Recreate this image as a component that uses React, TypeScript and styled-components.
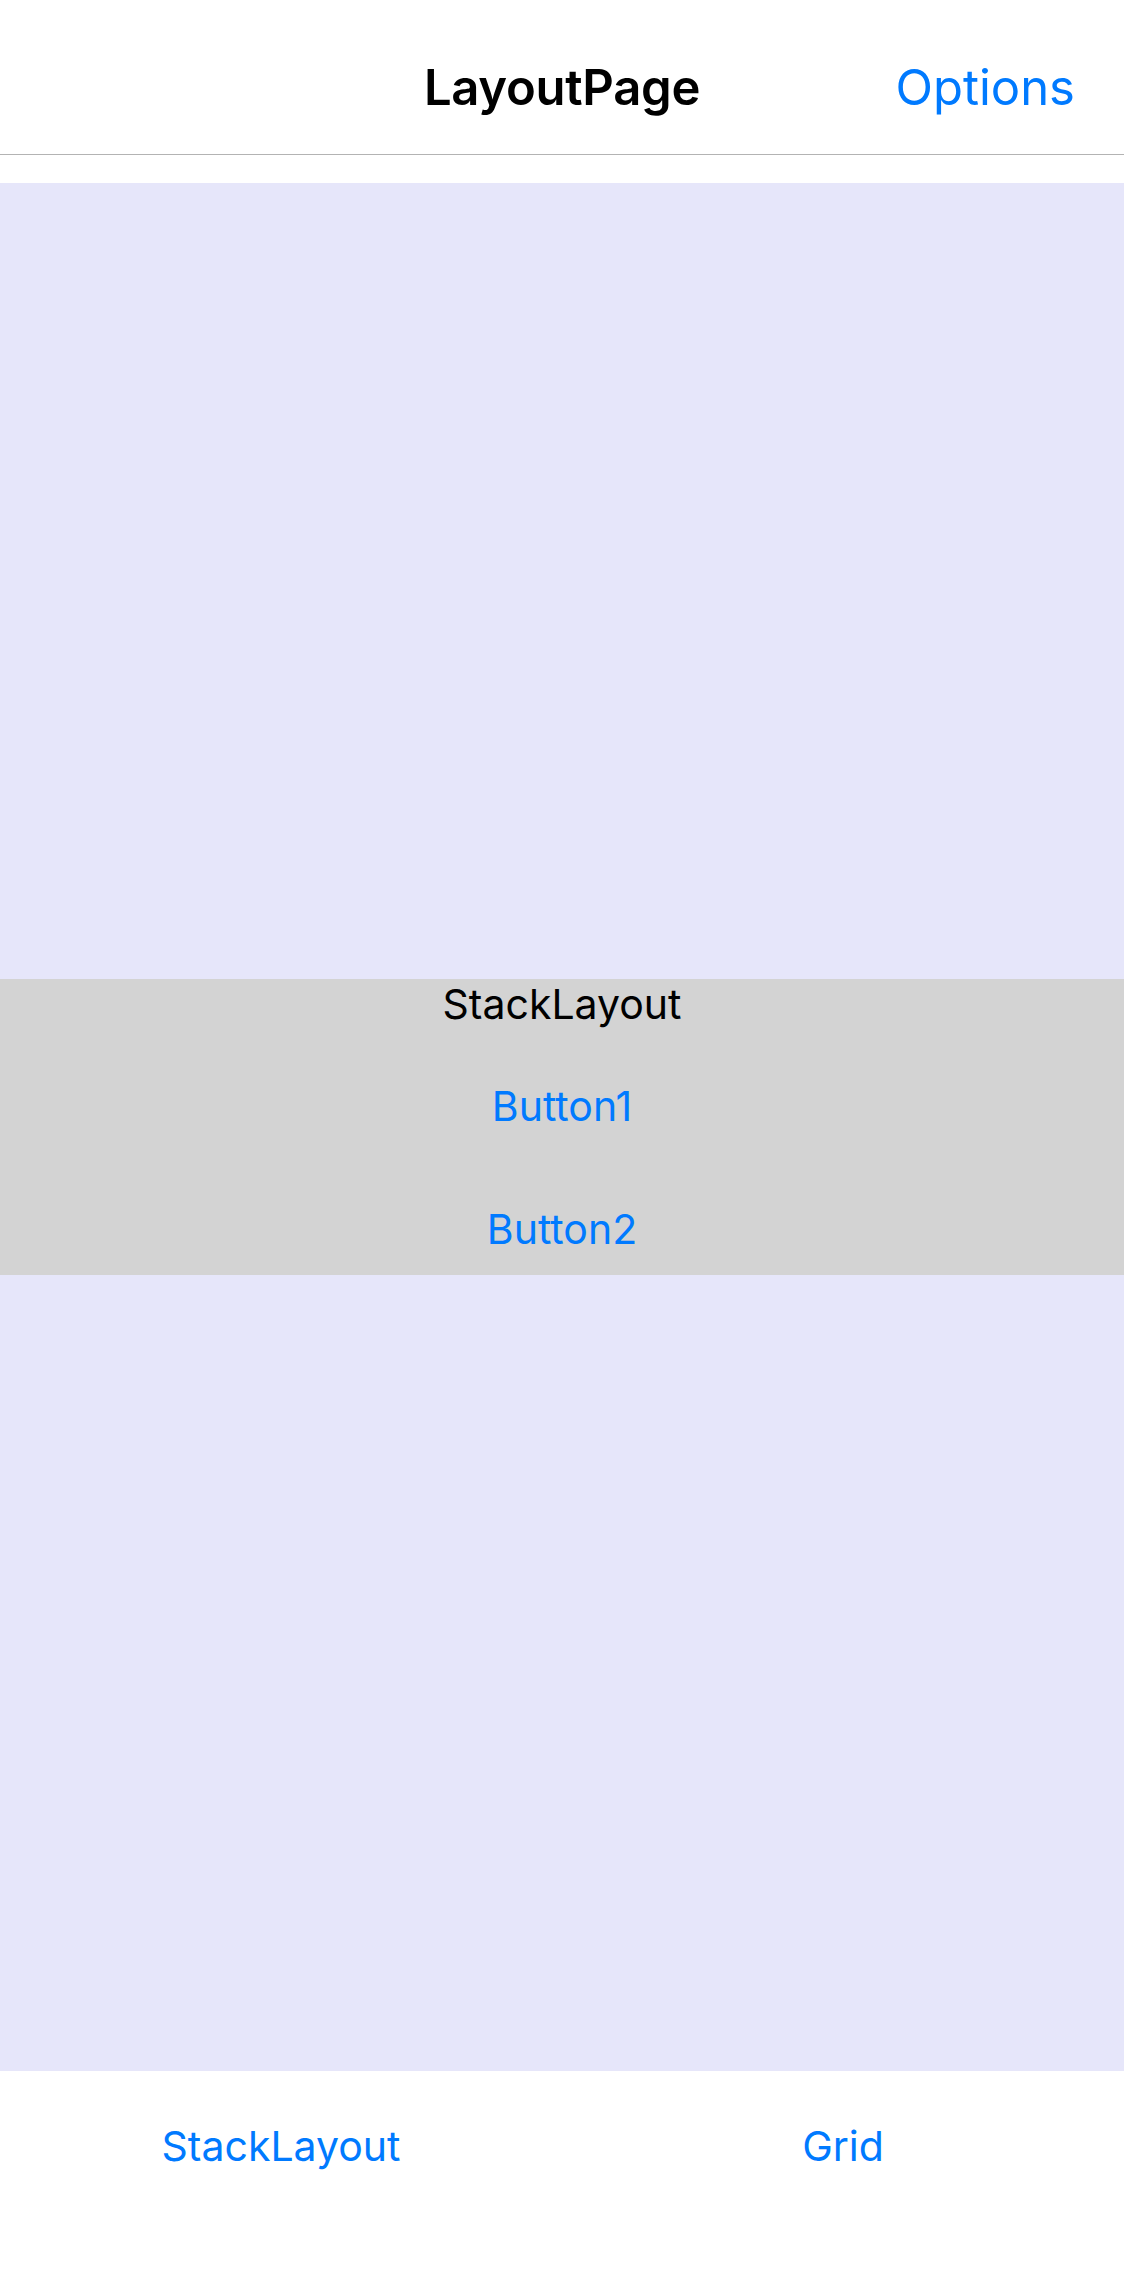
import React from "react";
import styled, { createGlobalStyle } from "styled-components";

const Global = createGlobalStyle`
  html, body { margin: 0; padding: 0; background: #ffffff; }
  body { font-family: Inter, "Liberation Sans", Arial, sans-serif; }
  * { box-sizing: border-box; }
`;

const Screen = styled.div`
  width: 1124px;
  height: 2286px;
  display: flex;
  flex-direction: column;
  background: #ffffff;
  overflow: hidden;
`;

const NavBar = styled.header`
  height: 155px;
  flex: none;
  display: grid;
  grid-template-columns: 1fr auto 1fr;
  align-items: start;
  padding: 0 49px 0 49px;
  border-bottom: 1px solid #b3b3b3;
`;

const Title = styled.h1`
  grid-column: 2;
  margin: 0;
  padding-top: 58px;
  font-size: 49px;
  font-weight: 600;
  line-height: 60px;
  color: #000000;
  letter-spacing: -0.3px;
`;

const NavAction = styled.button`
  grid-column: 3;
  justify-self: end;
  margin: 0;
  padding: 58px 0 0 0;
  border: none;
  background: none;
  font-family: inherit;
  font-size: 49px;
  font-weight: 400;
  line-height: 60px;
  color: #007aff;
`;

const Content = styled.main`
  flex: 1;
  display: flex;
  flex-direction: column;
  justify-content: center;
  margin-top: 28px;
  background: #e6e6fa;
`;

const Stack = styled.section`
  display: flex;
  flex-direction: column;
  align-items: stretch;
  gap: 18px;
  background: #d3d3d3;
`;

const StackLabel = styled.div`
  text-align: center;
  font-size: 41px;
  line-height: 50px;
  color: #000000;
`;

const StackButton = styled.button`
  height: 105px;
  border: none;
  background: none;
  font-family: inherit;
  font-size: 41px;
  color: #007aff;
  padding: 12px 0 0 0;
`;

const TabBar = styled.nav`
  height: 215px;
  flex: none;
  display: grid;
  grid-template-columns: 1fr 1fr;
  background: #ffffff;
`;

const Tab = styled.button`
  border: none;
  background: none;
  font-family: inherit;
  font-size: 41px;
  line-height: 50px;
  color: #007aff;
  align-self: start;
  padding-top: 50px;
`;

export default function App() {
  return (
    <>
      <Global />
      <Screen>
        <NavBar>
          <Title>LayoutPage</Title>
          <NavAction>Options</NavAction>
        </NavBar>
        <Content>
          <Stack>
            <StackLabel>StackLayout</StackLabel>
            <StackButton>Button1</StackButton>
            <StackButton>Button2</StackButton>
          </Stack>
        </Content>
        <TabBar>
          <Tab>StackLayout</Tab>
          <Tab>Grid</Tab>
        </TabBar>
      </Screen>
    </>
  );
}
